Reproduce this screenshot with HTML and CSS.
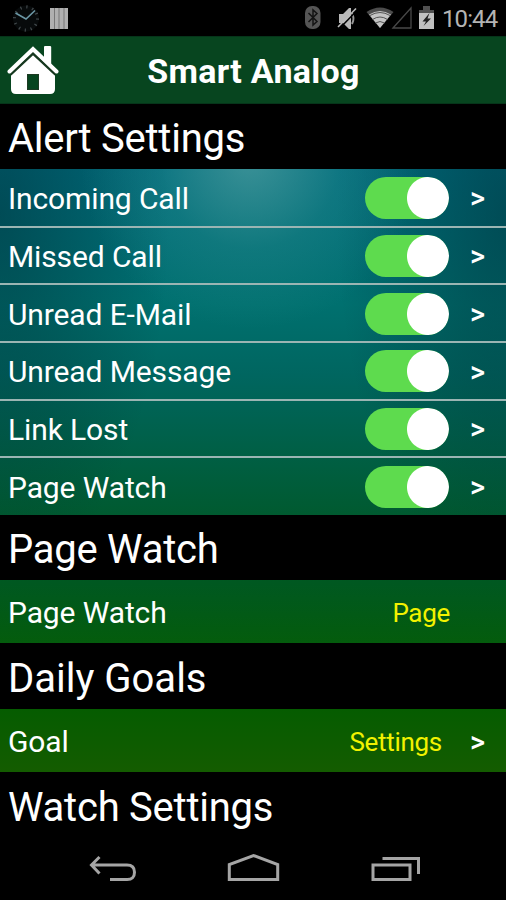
FILE: index.html
```
<!DOCTYPE html>
<html lang="en">
<head>
    <meta charset="utf-8">
    <title>Smart Analog</title>
    <meta name="viewport" content="width=device-width, initial-scale=1">
    <link rel="stylesheet" href="styles.css">
</head>
<body>
    <div class="status-bar">
        <svg class="status-left" width="80" height="36" viewBox="0 0 80 36">
            <circle cx="26" cy="18.500" r="11.500" fill="none" stroke="#62696d" stroke-width="3" stroke-dasharray="1.2 4.820"/>
            <circle cx="26" cy="18.500" r="13" fill="#12181b" opacity=".4"/>
            <path d="M15.500 13L26 19L35 10.500" fill="none" stroke="#6c98a6" stroke-width="1.600"/>
            <path d="M50 8h18v21h-18z" fill="#b0b0b0"/>
            <path d="M54.500 8v21M59 8v21M64 8v21" stroke="#777" stroke-width="1"/>
        </svg>
        <svg class="status-right" width="150" height="36" viewBox="290 0 150 36">
            <rect x="305" y="6" width="15.500" height="23" rx="7" fill="#555"/>
            <path d="M308.500 13L317 21.500L313 25V10L317 13.500L308.500 22" fill="none" stroke="#141414" stroke-width="1.500"/>
            <path d="M339 14h4l6-6h2v21h-2l-6-6h-4z" fill="#b8b8b8"/>
            <path d="M352 13q3 5.500 0 11" fill="none" stroke="#999" stroke-width="2"/>
            <path d="M340 28L357.500 10" stroke="#000" stroke-width="1.500"/>
            <path d="M338 27L356 8.500" stroke="#bbb" stroke-width="1.600"/>
            <path d="M366.500 12Q380 3 393.500 12L380 28z" fill="#4c4c4c"/>
            <path d="M369 14.500Q380 7.500 391 14.500L380 28z" fill="#c4c4c4"/>
            <path d="M370 15.500Q380 9.500 390 15.500M372.500 19.500Q380 14.500 387.500 19.500M375.500 23Q380 20 384.500 23" fill="none" stroke="#555" stroke-width="1"/>
            <path d="M393 28L411 8V28z" fill="none" stroke="#484848" stroke-width="1.300"/>
            <path d="M419 10h4v-4h7v4h4v4h-15z" fill="#505050"/>
            <path d="M419 13h15v16h-15z" fill="#c0c0c0"/>
            <path d="M429.500 13L422.500 21.500H426L423.500 26L431 18.500H427.500z" fill="#202020"/>
        </svg>
        <span class="clock">10:44</span>
    </div>

    <div class="header">
        <svg class="home" width="52" height="52" viewBox="7 44 52 52">
            <path d="M44 47q0-1 1-1h5q1.200 0 1.200 1v19L44 59z" fill="#fff"/>
            <path d="M33 51L55 73V89Q55 94 50 94H16Q11 94 11 89V73z" fill="#fff"/>
            <path d="M10.500 74.500L33 53.500L55.500 74.500" fill="none" stroke="#16381f" stroke-width="2.500"/>
            <path d="M9.500 71.500L33 49L56.500 71.500" fill="none" stroke="#fff" stroke-width="4" stroke-linecap="round"/>
            <rect x="27.500" y="74.500" width="11" height="15" fill="#07451f" stroke="#1d3a22" stroke-width="1"/>
        </svg>
        <h1>Smart Analog</h1>
    </div>

    <div class="settings">
        <h2>Alert Settings</h2>
        <div class="alerts">
            <div class="row">
                <span class="label">Incoming Call</span>
                <span class="toggle"></span>
                <span class="arrow">&gt;</span>
            </div>
            <div class="row">
                <span class="label">Missed Call</span>
                <span class="toggle"></span>
                <span class="arrow">&gt;</span>
            </div>
            <div class="row">
                <span class="label">Unread E-Mail</span>
                <span class="toggle"></span>
                <span class="arrow">&gt;</span>
            </div>
            <div class="row">
                <span class="label">Unread Message</span>
                <span class="toggle"></span>
                <span class="arrow">&gt;</span>
            </div>
            <div class="row">
                <span class="label">Link Lost</span>
                <span class="toggle"></span>
                <span class="arrow">&gt;</span>
            </div>
            <div class="row">
                <span class="label">Page Watch</span>
                <span class="toggle"></span>
                <span class="arrow">&gt;</span>
            </div>
        </div>

        <h2>Page Watch</h2>
        <div class="row single">
            <span class="label">Page Watch</span>
            <span class="value page">Page</span>
        </div>

        <h2 class="goals">Daily Goals</h2>
        <div class="row single">
            <span class="label">Goal</span>
            <span class="value">Settings</span>
            <span class="arrow">&gt;</span>
        </div>

        <h2>Watch Settings</h2>
    </div>

    <div class="nav-bar">
        <svg width="506" height="63" viewBox="0 837 506 63" fill="none" stroke="#a5a5a5" stroke-width="3">
            <path d="M92 865H127Q134.500 865 134.500 872.300T127 879.500H110M99.500 857L91.500 865L99.500 873.500"/>
            <path d="M229.300 879.500V864.500L253.500 855.500L277.700 864.500V879.500z"/>
            <path d="M373 865H410V879.500H373zM382.500 858.500H418.500V874"/>
        </svg>
    </div>
</body>
</html>
```

FILE: styles.css
```
body {
    background-color: #000;
    color: #fff;
    font-family: Roboto, "Liberation Sans", sans-serif;
    margin: 0;
    height: 900px;
    overflow: hidden;
}

svg {
    display: block;
}

.status-bar {
    display: flex;
    align-items: center;
    height: 36px;
}

.status-right {
    margin-left: 210px;
}

.clock {
    color: #b4b4b4;
    font-size: 24px;
    letter-spacing: -0.9px;
    line-height: 34px;
    margin-left: 2px;
    padding-top: 2px;
}

.header {
    display: flex;
    align-items: center;
    box-sizing: border-box;
    height: 68px;
    padding: 0 7px;
    background-color: #07451f;
    border-top: 1px solid #06351a;
    border-bottom: 1px solid #06351a;
}

h1 {
    flex: 1;
    margin: 0 52px 0 0;
    padding: 2px 0 0 1px;
    text-align: center;
    font-size: 34px;
    line-height: 66px;
    font-weight: 700;
    letter-spacing: 0.3px;
}

/* One backdrop behind all the rows, the section titles cover it */
.settings {
    height: 733px;
    background:
        radial-gradient(circle at 250px 55px, rgba(90, 165, 165, 0.65), rgba(60, 150, 150, 0.25) 90px, transparent 170px),
        radial-gradient(ellipse 170px 370px at 0 110px, rgba(0, 35, 45, 0.45), transparent),
        radial-gradient(ellipse 170px 370px at 100% 110px, rgba(0, 35, 45, 0.45), transparent),
        linear-gradient(#006c7c 65px, #00706f 200px, #006660 270px, #006048 340px, #005a30 410px, #005820 480px, #045c0c 540px, #055c00 605px, #145c00 668px);
}

h2 {
    margin: 0;
    padding-left: 8px;
    height: 65px;
    line-height: 70px;
    background-color: #000;
    font-size: 40px;
    font-weight: 400;
    letter-spacing: -0.25px;
}

h2.goals {
    letter-spacing: 0;
}

.alerts {
    display: grid;
    grid-template-rows: 58.5px repeat(4, 57.7px) 1fr;
    height: 346px;
}

.row {
    display: flex;
    align-items: center;
    box-sizing: border-box;
    padding: 1px 0 0 8px;
    border-bottom: 2px solid #9bb5b3;
}

.alerts .row:last-child,
.row.single {
    border-bottom: none;
}

.alerts .row:last-child {
    padding-top: 0;
}

.row.single {
    height: 63px;
}

.row.single + h2 {
    height: 66px;
    line-height: 71px;
}

.label {
    flex: 1;
    font-size: 30px;
    letter-spacing: -0.12px;
    padding-top: 1px;
}

.toggle {
    width: 84px;
    height: 42px;
    border-radius: 21px;
    background: radial-gradient(circle at 63px 21px, #fff 20.500px, #5edb4e 21.500px);
}

.arrow {
    width: 36px;
    margin-left: 21px;
    font-size: 29px;
    font-weight: 500;
    padding-top: 1px;
}

.value {
    color: #f2f200;
    font-size: 26px;
    letter-spacing: -0.3px;
    padding-top: 1px;
    margin-right: 7px;
}

.value.page {
    margin-right: 56px;
}

.nav-bar {
    height: 63px;
}
```
